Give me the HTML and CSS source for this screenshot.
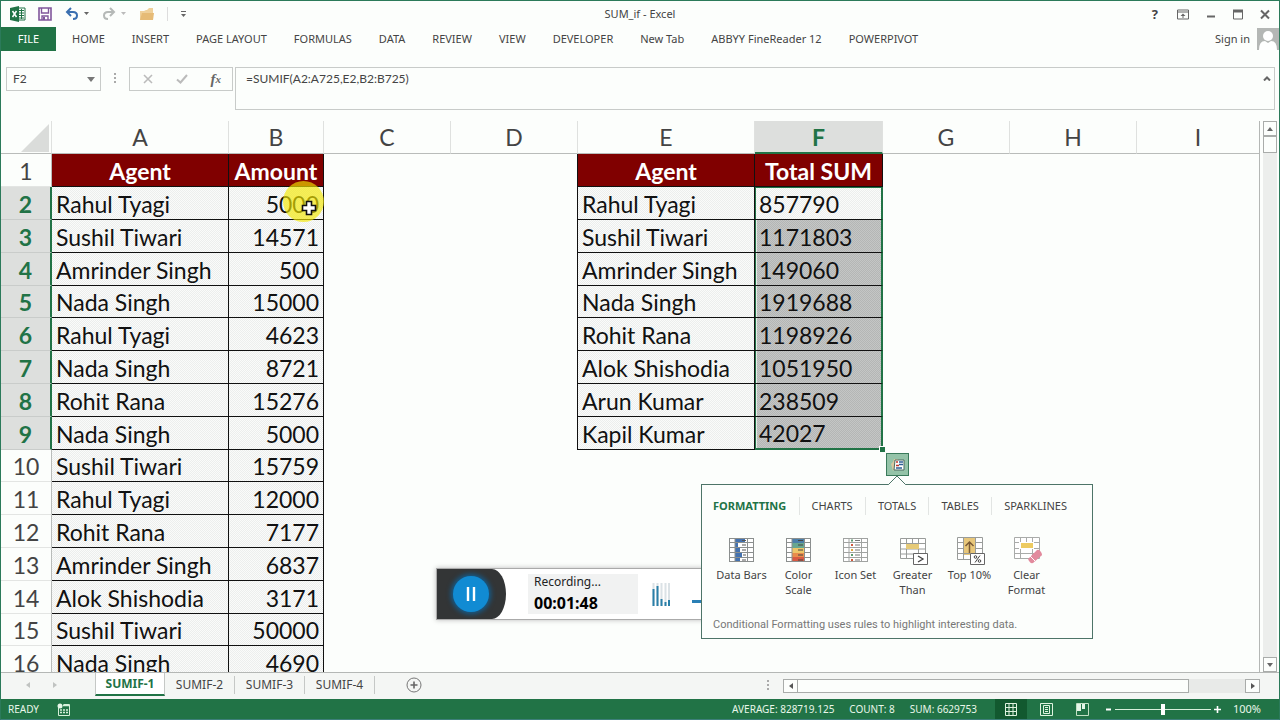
FILE: index.html
```html
<!DOCTYPE html>
<html lang="en">
<head>
<meta charset="utf-8">
<title>SUM_if - Excel</title>
<link rel="stylesheet" href="styles.css">
</head>
<body>
<div class="window">
  <header class="titlebar">
    <div class="quick">
      <svg class="logo" width="16" height="16" viewBox="0 0 16 16"><path d="M8 2h7v12H8z" fill="#fff" stroke="#217346"/><path d="M9 4.500h5M9 7h5M9 9.500h5M9 12h5M11.500 3v10" stroke="#217346"/><path d="M0 2l9-2v16l-9-2z" fill="#217346"/><path d="M2.500 5l4 6M6.500 5l-4 6" stroke="#fff" stroke-width="1.500"/></svg>
      <button class="save" aria-label="Save"><svg width="14" height="14" viewBox="0 0 14 14"><path d="M1 1h12v12H1z" fill="#fff" stroke="#80569b" stroke-width="1.600"/><path d="M3.500 1v5h7V1M4 13V9h6v4" fill="none" stroke="#80569b" stroke-width="1.400"/><path d="M5 10h2v3H5z" fill="#80569b"/></svg></button>
      <button class="undo" aria-label="Undo"><svg width="25" height="14" viewBox="0 0 25 14"><path d="M6 1L2 5l4 4M2 5h6q4 0 4 3.500T8 12" fill="none" stroke="#3a6fb0" stroke-width="2"/><path d="M19 5h5l-2.500 3z" fill="#666"/></svg></button>
      <button class="redo" aria-label="Redo"><svg width="25" height="14" viewBox="0 0 25 14"><path d="M8 1l4 4-4 4M12 5H6Q2 5 2 8.500T6 12" fill="none" stroke="#b5b9b7" stroke-width="2"/><path d="M19 5h5l-2.500 3z" fill="#bbb"/></svg></button>
      <button class="open" aria-label="Open"><svg width="16" height="14" viewBox="0 0 16 14"><path d="M1 13V4h4l2-1h1l2-2h4v12z" fill="#efd09a"/><path d="M1 13l2-7h12l-1 7z" fill="#e6bb76"/></svg></button>
      <span class="rule"></span>
      <button aria-label="Customize"><svg width="7" height="8" viewBox="0 0 7 8"><path d="M1 1.500h5" stroke="#666"/><path d="M1 4h5L3.500 7z" fill="#666"/></svg></button>
    </div>
    <h1>SUM_if - Excel</h1>
    <div class="winbtns">
      <button class="help" aria-label="Help">?</button>
      <button aria-label="Ribbon display"><svg width="12" height="11" viewBox="0 0 12 11"><path d="M.5 1h11v9H.5zM.5 3h11" fill="none" stroke="#666"/><path d="M6 4.500L3.500 7h2v2h1V7h2z" fill="#666"/></svg></button>
      <button aria-label="Minimize"><svg width="10" height="11" viewBox="0 0 10 11"><path d="M1 7.500h8" stroke="#666" stroke-width="2"/></svg></button>
      <button aria-label="Maximize"><svg width="10" height="11" viewBox="0 0 10 11"><path d="M.5 1v9h9V1" fill="none" stroke="#666"/><path d="M0 2h10" stroke="#666" stroke-width="3"/></svg></button>
      <button aria-label="Close"><svg width="10" height="11" viewBox="0 0 10 11"><path d="M1 1.500l8 8M9 1.500l-8 8" stroke="#666" stroke-width="2"/></svg></button>
    </div>
  </header>

  <nav class="ribbon">
    <button class="file">FILE</button>
    <div class="ribbon-tabs">
      <button>HOME</button><button>INSERT</button><button>PAGE LAYOUT</button><button>FORMULAS</button><button>DATA</button><button>REVIEW</button><button>VIEW</button><button>DEVELOPER</button><button>New Tab</button><button>ABBYY FineReader 12</button><button>POWERPIVOT</button>
    </div>
    <a class="signin" href="#">Sign in</a>
    <svg class="avatar" width="22" height="22" viewBox="0 0 22 22"><path d="M0 0h22v22H0z" fill="#b4b7b5"/><circle cx="11" cy="8" r="5" fill="#fff"/><path d="M2 22q0-9 6-9l3 2 3-2q6 0 6 9z" fill="#fff"/></svg>
  </nav>

  <section class="formula-row">
    <div class="namebox"><input aria-label="Name box" value="F2"><button aria-label="Names"><svg width="8" height="5" viewBox="0 0 8 5"><path d="M0 0h8L4 5z" fill="#777"/></svg></button></div>
    <span class="dots"></span>
    <div class="fx">
      <button aria-label="Cancel"><svg width="10" height="10" viewBox="0 0 10 10"><path d="M1 1l8 8M9 1L1 9" stroke="#bbb" stroke-width="1.600"/></svg></button>
      <button aria-label="Enter"><svg width="12" height="10" viewBox="0 0 12 10"><path d="M1 5.500l3.500 3L11 1" fill="none" stroke="#bbb" stroke-width="2"/></svg></button>
      <button class="fn" aria-label="Insert function"><i>f</i><small>x</small></button>
    </div>
    <div class="formula"><input aria-label="Formula" value="=SUMIF(A2:A725,E2,B2:B725)"><button aria-label="Collapse"><svg width="8" height="5" viewBox="0 0 8 5"><path d="M1 4.500l3-3 3 3" fill="none" stroke="#666" stroke-width="2"/></svg></button></div>
  </section>

  <main class="workspace">
    <div class="sheet">
      <table>
        <colgroup><col class="c-row"><col class="c-name"><col class="c-amount"><col class="c-std"><col class="c-std"><col class="c-name"><col class="c-total"><col class="c-std"><col class="c-std"><col></colgroup>
        <thead><tr><th class="corner"><svg width="28" height="28" viewBox="0 0 28 28"><path d="M28 0v28H0z" fill="#dadcda"/></svg></th><th>A</th><th>B</th><th>C</th><th>D</th><th>E</th><th class="on">F</th><th>G</th><th>H</th><th>I</th></tr></thead>
        <tbody>
          <tr><th>1</th><td class="head">Agent</td><td class="head">Amount</td><td></td><td class="pre"></td><td class="head">Agent</td><td class="head">Total SUM</td><td></td><td></td><td></td></tr>
          <tr><th class="on">2</th><td class="data">Rahul Tyagi</td><td class="data num pointed">5000<span class="halo"></span><svg class="cursor" width="16" height="16" viewBox="0 0 16 16"><path d="M5.500 1.500h5v4h4v5h-4v4h-5v-4h-4v-5h4z" fill="#fff" stroke="#111" stroke-width="1.600"/></svg></td><td></td><td class="pre"></td><td class="data">Rahul Tyagi</td><td class="sel first">857790</td><td></td><td></td><td></td></tr>
          <tr><th class="on">3</th><td class="data">Sushil Tiwari</td><td class="data num">14571</td><td></td><td class="pre"></td><td class="data">Sushil Tiwari</td><td class="sel">1171803</td><td></td><td></td><td></td></tr>
          <tr><th class="on">4</th><td class="data">Amrinder Singh</td><td class="data num">500</td><td></td><td class="pre"></td><td class="data">Amrinder Singh</td><td class="sel">149060</td><td></td><td></td><td></td></tr>
          <tr><th class="on">5</th><td class="data">Nada Singh</td><td class="data num">15000</td><td></td><td class="pre"></td><td class="data">Nada Singh</td><td class="sel">1919688</td><td></td><td></td><td></td></tr>
          <tr><th class="on">6</th><td class="data">Rahul Tyagi</td><td class="data num">4623</td><td></td><td class="pre"></td><td class="data">Rohit Rana</td><td class="sel">1198926</td><td></td><td></td><td></td></tr>
          <tr><th class="on">7</th><td class="data">Nada Singh</td><td class="data num">8721</td><td></td><td class="pre"></td><td class="data">Alok Shishodia</td><td class="sel">1051950</td><td></td><td></td><td></td></tr>
          <tr><th class="on">8</th><td class="data">Rohit Rana</td><td class="data num">15276</td><td></td><td class="pre"></td><td class="data">Arun Kumar</td><td class="sel">238509</td><td></td><td></td><td></td></tr>
          <tr><th class="on">9</th><td class="data">Nada Singh</td><td class="data num">5000</td><td></td><td class="pre"></td><td class="data">Kapil Kumar</td><td class="sel last">42027<span class="handle"></span></td><td></td><td></td><td></td></tr>
          <tr><th>10</th><td class="data">Sushil Tiwari</td><td class="data num">15759</td><td colspan="7"></td></tr>
          <tr><th>11</th><td class="data">Rahul Tyagi</td><td class="data num">12000</td><td colspan="7"></td></tr>
          <tr><th>12</th><td class="data">Rohit Rana</td><td class="data num">7177</td><td colspan="7"></td></tr>
          <tr><th>13</th><td class="data">Amrinder Singh</td><td class="data num">6837</td><td colspan="7"></td></tr>
          <tr><th>14</th><td class="data">Alok Shishodia</td><td class="data num">3171</td><td colspan="7"></td></tr>
          <tr><th>15</th><td class="data">Sushil Tiwari</td><td class="data num">50000</td><td colspan="7"></td></tr>
          <tr><th>16</th><td class="data">Nada Singh</td><td class="data num">4690</td><td colspan="7"></td></tr>
        </tbody>
      </table>
    </div>
    <div class="vscroll">
      <button aria-label="Scroll up"><svg width="6" height="4" viewBox="0 0 6 4"><path d="M0 4h6L3 0z" fill="#666"/></svg></button>
      <div class="vthumb"></div><div class="track"></div>
      <button aria-label="Scroll down"><svg width="6" height="4" viewBox="0 0 6 4"><path d="M0 0h6L3 4z" fill="#666"/></svg></button>
    </div>

    <aside class="recorder">
      <div class="rec-side"><button aria-label="Pause"><svg width="10" height="16" viewBox="0 0 10 16"><path d="M2 1v14M8 1v14" stroke="#fff" stroke-width="2.400"/></svg></button></div>
      <div class="rec-info"><span>Recording...</span><strong>00:01:48</strong></div>
      <svg class="meter" width="18" height="23" viewBox="0 0 18 23"><path d="M1.500 0v23M5.500 0v23M9.500 0v23M13.500 0v23M17 0v23" stroke="#dbe2e6" stroke-width="2"/><path d="M1.500 6v17M5.500 3v20M9.500 16v7M13.500 19v4M17 17v6" stroke="#2a7fa8" stroke-width="2"/></svg>
      <span class="rec-min"></span>
    </aside>

    <button class="quick-analysis" aria-label="Quick analysis"><svg width="16" height="16" viewBox="0 0 16 16"><path d="M1 7q2-1 3-5h4v8H5q0 2-2 4z" fill="#d9c9a0"/><path d="M5 3h9v10H4z" fill="#fff" stroke="#4d6b60"/><path d="M6 5h2M6 8.500h3" stroke="#c0392b" stroke-width="1.500"/><path d="M9 5h4M9 7.500h4M6 11h6" stroke="#2f5f95" stroke-width="1.500"/></svg></button>
    <section class="popup">
      <svg class="notch" width="18" height="10" viewBox="0 0 18 10"><path d="M0 10L9 1l9 9z" fill="#fcfefc"/><path d="M0 9.500h.5L9 1l8.500 8.500h.5" fill="none" stroke="#4d7468"/></svg>
      <div class="tabs"><button class="active">FORMATTING</button><button>CHARTS</button><button>TOTALS</button><button>TABLES</button><button>SPARKLINES</button></div>
      <div class="tools">
        <button><svg width="30" height="30" viewBox="0 0 30 30"><path d="M2 3h25v24H2z" fill="#fff"/><path d="M8 3h10v4H8zM8 8h3v4H8zM8 13h5v4H8zM8 18h7v4H8zM8 23h5v4H8z" fill="#4472b0"/><path d="M2 3.500h25M2 7.500h25M2 12.500h25M2 17.500h25M2 22.500h25M2 26.500h25M2.500 3v24M8 3v24M20.500 3v24M26.500 3v24" fill="none" stroke="#8b8f8e"/><path d="M15 5.500h4M15 10h4M15 15h4M16 20h3M15 25h4" stroke="#555"/></svg>Data Bars</button>
        <button><svg width="30" height="30" viewBox="0 0 30 30"><path d="M2 3h25v24H2z" fill="#fff"/><path d="M8 3h13v5H8z" fill="#4b7fa9"/><path d="M8 8h13v5H8z" fill="#68a790"/><path d="M8 13h13v5H8z" fill="#edc568"/><path d="M8 18h13v4H8z" fill="#e98c4c"/><path d="M8 22h13v5H8z" fill="#d95a43"/><path d="M2 3.500h25M2 7.500h6M21 7.500h6M2 12.500h6M21 12.500h6M2 17.500h6M21 17.500h6M2 22.500h6M21 22.500h6M2 26.500h25M2.500 3v24M8 3v24M20.500 3v24M26.500 3v24" fill="none" stroke="#8b8f8e"/><path d="M14 5.500h5M14 10h5M14 15h5M14 20h5M14 25h5" stroke="#444"/></svg>Color Scale</button>
        <button><svg width="30" height="30" viewBox="0 0 30 30"><path d="M2 3h25v24H2z" fill="#fff"/><path d="M2 3.500h25M2 7.500h25M2 12.500h25M2 17.500h25M2 22.500h25M2 26.500h25M2.500 3v24M8 3v24M20.500 3v24M26.500 3v24" fill="none" stroke="#a0a3a1"/><path d="M10 5.500h2M10 20h2" stroke="#5c9b6e" stroke-width="2"/><path d="M10 10h2M10 25h2" stroke="#cf5a3c" stroke-width="2"/><path d="M10 15h2" stroke="#e0a63e" stroke-width="2"/><path d="M14 5.500h5M14 10h5M14 15h5M14 20h5M14 25h5" stroke="#777"/></svg>Icon Set</button>
        <button><svg width="30" height="30" viewBox="0 0 30 30"><path d="M2.500 3.500h25v20h-25z" fill="#fff"/><path d="M2.500 3.500h25v20h-25zM2 8.500h25M2 14h25M2 19h25M8.500 3v20M14.500 3v5M20.500 3v20" fill="none" stroke="#999c9a"/><path d="M8 9h13v5H8z" fill="#e6ca78"/><path d="M15.500 18.500h14v11h-14z" fill="#fff" stroke="#666"/><path d="M20 21l5 3-5 3" fill="none" stroke="#444" stroke-width="1.300"/></svg>Greater Than</button>
        <button><svg width="30" height="30" viewBox="0 0 30 30"><path d="M2.500 3.500h25v21h-25z" fill="#fff"/><path d="M8 3h13v17H8z" fill="#e8c77a"/><path d="M2.500 2.500h25v22h-25zM2 7.500h6M2 13.500h6M2 18.500h13M21 7.500h6M21 13.500h6M8.500 3v21M20.500 3v16" fill="none" stroke="#999c9a"/><path d="M14.500 18V7M10.500 11l4-4 4 4" fill="none" stroke="#7a5a36" stroke-width="1.500"/><path d="M15.500 18.500h14v11h-14z" fill="#fff" stroke="#666"/><circle cx="20.500" cy="22" r="1.300" fill="none" stroke="#444"/><circle cx="24.500" cy="26" r="1.300" fill="none" stroke="#444"/><path d="M25 20.500l-5 7" stroke="#444"/></svg>Top 10%</button>
        <button><svg width="30" height="30" viewBox="0 0 30 30"><path d="M2.500 2.500h25v21h-25z" fill="#fff"/><path d="M2.500 2.500h25v21h-25zM2 7.500h25M2 13.500h25M2 18.500h25M8.500 3v21M14.500 3v5M20.500 3v21" fill="none" stroke="#a9aba9"/><path d="M7 7h15v7H7z" fill="#fff"/><path d="M9 8h12v5H9z" fill="#edcb62"/><path d="M16 24l9-9q2-1 4 2t0 4l-8 7q-3 1-5-4z" fill="#e28a9d"/><path d="M18 21l5 5" stroke="#fff"/></svg>Clear Format</button>
      </div>
      <p>Conditional Formatting uses rules to highlight interesting data.</p>
    </section>
  </main>

  <footer>
    <div class="sheetbar">
      <div class="arrows"><button aria-label="Previous sheet"><svg width="4" height="6" viewBox="0 0 4 6"><path d="M4 0v6L0 3z" fill="#c0c3c1"/></svg></button><button aria-label="Next sheet"><svg width="4" height="6" viewBox="0 0 4 6"><path d="M0 0v6l4-3z" fill="#c0c3c1"/></svg></button></div>
      <button class="stab active">SUMIF-1</button><button class="stab">SUMIF-2</button><button class="stab">SUMIF-3</button><button class="stab">SUMIF-4</button>
      <button class="add" aria-label="New sheet"><svg width="16" height="16" viewBox="0 0 16 16"><circle cx="8" cy="8" r="7" fill="none" stroke="#777"/><path d="M8 4.500v7M4.500 8h7" stroke="#666" stroke-width="1.600"/></svg></button>
      <div class="hscroll"><span class="dots"></span><button aria-label="Scroll left"><svg width="4" height="6" viewBox="0 0 4 6"><path d="M4 0v6L0 3z" fill="#555"/></svg></button><div class="hthumb"></div><div class="track"></div><button aria-label="Scroll right"><svg width="4" height="6" viewBox="0 0 4 6"><path d="M0 0v6l4-3z" fill="#555"/></svg></button></div>
    </div>
    <div class="status">
      <span>READY</span>
      <svg class="macro" width="13" height="13" viewBox="0 0 13 13"><path d="M1.500 4.500v8h11v-11h-6" fill="none" stroke="#d6efd9"/><path d="M6 2.500h6M3 7h2M6 7h2M9 7h2M3 9.500h2M6 9.500h2M9 9.500h2" stroke="#d6efd9" stroke-width="1.600"/><circle cx="3" cy="3" r="2.500" fill="#e6f6e8"/></svg>
      <div class="stats"><span>AVERAGE: 828719.125</span><span>COUNT: 8</span><span>SUM: 6629753</span></div>
      <div class="views">
        <button class="active" aria-label="Normal"><svg width="12" height="13" viewBox="0 0 12 13"><path d="M.5.500h11v12H.5zM0 4.500h12M0 8.500h12M4 0v13M8 0v13" fill="none" stroke="#dff3df"/></svg></button>
        <button aria-label="Page layout"><svg width="13" height="13" viewBox="0 0 13 13"><path d="M.5.500h12v12H.5zM3.500 2.500h6v8h-6zM5 4.500h3M5 6.500h3M5 8.500h3" fill="none" stroke="#dff3df"/></svg></button>
        <button aria-label="Page break preview"><svg width="13" height="13" viewBox="0 0 13 13"><path d="M.5.500h12v12H.5z" fill="none" stroke="#c2e0c4"/><path d="M1 1h4v7H1zM6 1h3v5H6z" fill="#e6f6e8"/></svg></button>
      </div>
      <div class="zoomer"><button aria-label="Zoom out"><svg width="7" height="7" viewBox="0 0 7 7"><path d="M1 3.500h5" stroke="#fff" stroke-width="2"/></svg></button><input type="range" aria-label="Zoom" min="0" max="100" value="50"><button aria-label="Zoom in"><svg width="7" height="7" viewBox="0 0 7 7"><path d="M0 3.500h7M3.500 0v7" stroke="#fff" stroke-width="1.600"/></svg></button></div>
      <span class="pct">100%</span>
    </div>
  </footer>
</div>
</body>
</html>
```
FILE: styles.css
```css
* { box-sizing: border-box; }
body { margin: 0; font: 12px/16px "Noto Sans", "Open Sans", sans-serif; color: #444; background: #fcfefc; }
button { border: 0; padding: 0; margin: 0; background: none; font: inherit; color: inherit; display: flex; align-items: center; justify-content: center; white-space: nowrap; }
input { font: inherit; color: inherit; border: 0; padding: 0; background: none; min-width: 0; }
svg { display: block; flex: none; }
.window { height: 100vh; display: flex; flex-direction: column; border: 1px solid #2b7a5a; border-bottom-color: #3d7f7a; overflow: hidden; }

.titlebar { display: grid; grid-template-columns: 1fr auto 1fr; align-items: center; height: 26px; flex: none; }
.titlebar h1 { margin: 0; font-size: 11px; font-weight: 400; }
.quick { display: flex; align-items: center; padding-left: 9px; }
.save { margin-left: 12px; }
.undo { margin-left: 13px; }
.redo, .open { margin-left: 12px; }
.quick .rule { width: 1px; height: 14px; background: #ddd; margin: 0 12px; }
.winbtns { display: flex; justify-content: flex-end; align-items: center; gap: 17px; padding-right: 9px; }
.help { font-size: 13px; font-weight: 700; margin-right: 2px; }

.ribbon { display: flex; align-items: center; height: 24px; flex: none; font-size: 11px; }
.file { align-self: stretch; width: 55px; background: #217346; color: #fff; }
.ribbon-tabs { display: flex; gap: 27px; padding-left: 16px; flex: 1; }
.signin { color: inherit; text-decoration: none; margin-right: 7px; }

.formula-row { display: flex; align-items: flex-start; padding: 16px 4px 11px 5px; flex: none; font-family: Lato, "Noto Sans", sans-serif; }
.namebox, .fx { display: flex; align-items: center; border: 1px solid #c8cbc9; height: 24px; }
.namebox { width: 95px; padding: 0 5px 0 6px; }
.namebox input { flex: 1; }
.dots { width: 2px; height: 11px; margin: 6px 13px; background: repeating-linear-gradient(#aaa 0 2px, transparent 2px 4px); }
.fx { width: 104px; justify-content: space-between; padding: 0 11px 0 13px; margin-right: 2px; }
.fn { font: italic 700 15px/16px "Liberation Serif", serif; color: #666; }
.fn small { font-size: 11px; }
.formula { flex: 1; display: flex; align-items: flex-start; justify-content: space-between; height: 43px; border: 1px solid #c8cbc9; padding: 3px 3px 0 10px; }
.formula input { flex: 1; }
.formula button { height: 14px; }

.workspace { position: relative; flex: 1; min-height: 0; display: flex; }
.sheet { flex: 1; min-width: 0; overflow: hidden; border-right: 1px solid #b4b7b5; }
table { width: 100%; table-layout: fixed; border-collapse: separate; border-spacing: 0; font: 23px/30px Lato, "Noto Sans", sans-serif; color: #111; }
.c-row { width: 51px; } .c-name { width: 177px; } .c-amount { width: 95px; } .c-std { width: 127px; } .c-total { width: 128px; }
thead tr { height: 33px; }
tbody tr { height: 33px; }
tbody tr:nth-child(5n) { height: 32px; }
th, td { padding: 0; white-space: nowrap; overflow: hidden; }
th { font-weight: 400; color: #444; border-right: 1px solid #dfe1df; border-bottom: 1px solid #b9bcba; }
thead th:last-child { border-right: 0; }
tbody th { border-bottom-color: #e3e5e3; border-right-color: #b9bcba; padding-top: 1px; }
.corner svg { margin: 2px 2px 0 auto; }
th.on { background: #dddfdd; color: #217346; font-weight: 700; border-bottom-color: #c9ccca; }
thead .on { border-bottom: 2px solid #217346; }
tbody .on { border-right: 2px solid #217346; }
.data, .sel, .head { border-right: 1px solid #111; border-bottom: 1px solid #111; }
.data { padding: 1px 4px 0; background: repeating-conic-gradient(#eceeed 0 25%, #fafbfa 0 50%) 0 0 / 2px 2px; }
.pre { border-right: 1px solid #111; }
.num { text-align: right; }
.head { background: #800000; color: #fff; font-weight: 700; text-align: center; padding-top: 1px; }
.sel { padding: 1px 4px 0; background: repeating-conic-gradient(#b4b6b5 0 25%, #c4c6c5 0 50%) 0 0 / 2px 2px; border-right: 2px solid #217346; box-shadow: inset 1px 0 #217346, inset 2px 0 #e4eee8; }
.first { background: repeating-conic-gradient(#eceeed 0 25%, #fafbfa 0 50%) 0 0 / 2px 2px; box-shadow: inset 1px 0 #217346, inset 0 1px #217346; }
.last { position: relative; overflow: visible; border-bottom: 2px solid #217346; padding-top: 0; }
.handle { position: absolute; right: -4px; bottom: -4px; width: 6px; height: 6px; background: #217346; border: 1px solid #fff; border-width: 1px 0 0 1px; }
.pointed { position: relative; overflow: visible; }
.halo { position: absolute; right: -1px; top: -6px; width: 41px; height: 41px; border-radius: 50%; background: rgba(244, 232, 0, .65); }
.cursor { position: absolute; right: 6px; top: 13px; }

.vscroll { width: 19px; padding: 0 2px 0 3px; display: flex; flex-direction: column; }
.vscroll button, .vthumb { height: 15px; border: 1px solid #a9acaa; flex: none; background: #fcfefc; }
.vthumb { height: 17px; }
.track { flex: 1; background: #eceeec; }

.recorder { position: absolute; left: 435px; top: 447px; width: 300px; height: 52px; display: flex; align-items: center; background: #fff; border: 1px solid #aaa; box-shadow: 0 0 5px #bbb; }
.rec-side { width: 69px; height: 50px; display: flex; align-items: center; padding-left: 16px; background: #333536; border-radius: 0 14px 14px 0 / 0 25px 25px 0; }
.rec-side button { width: 36px; height: 36px; border-radius: 50%; background: #118bd3; box-shadow: 0 0 5px 2px #135e91; }
.rec-info { width: 110px; height: 40px; margin-left: 22px; padding-left: 6px; background: #f1f2f2; color: #222; display: flex; flex-direction: column; justify-content: space-between; font-size: 12px; }
.rec-info strong { font-size: 16px; line-height: 22px; color: #000; }
.meter { margin-left: 14px; }
.rec-min { width: 20px; height: 3px; margin: 14px 0 0 22px; background: #2a7fb5; }

.quick-analysis { position: absolute; left: 885px; top: 332px; width: 23px; height: 23px; border: 1px solid #3a7a5b; background: #94c3a8; }
.popup { position: absolute; left: 700px; top: 363px; width: 392px; padding: 12px 11px 5px; background: #fcfefc; border: 1px solid #4d7468; font-size: 11px; }
.notch { position: absolute; left: 186px; top: -10px; }
.tabs { display: flex; justify-content: space-between; padding-right: 14px; }
.tabs button { position: relative; height: 18px; }
.tabs button + button::before { content: ""; position: absolute; left: -13px; top: 0; width: 1px; height: 18px; background: #e2e5e3; }
.tabs .active { color: #217346; font-weight: 700; }
.tools { display: flex; padding-top: 20px; }
.tools button { width: 57px; height: 68px; flex-direction: column; justify-content: flex-start; gap: 2px; padding: 0 6px; white-space: normal; line-height: 15px; }
.tools button:first-child, .tools button:nth-child(5) { white-space: nowrap; }
.popup p { margin: 14px 0 0; color: #777; font-family: Roboto, "Noto Sans", sans-serif; }

.sheetbar { display: flex; height: 27px; background: #f4f6f4; border-top: 1px solid #b4b7b5; }
.arrows { width: 94px; display: flex; align-items: center; padding: 0 0 2px 25px; gap: 23px; }
.stab { width: 70px; height: 18px; border-right: 1px solid #c5c8c6; margin-top: 3px; }
.stab.active { background: #fff; color: #217346; font-weight: 700; height: 23px; margin-top: 0; border: 1px solid #c5c8c6; border-width: 0 1px; border-bottom: 2px solid #217346; }
.add { height: 24px; margin-left: 31px; }
.hscroll { margin-left: auto; width: 513px; display: flex; padding: 6px 19px 0 0; }
.hscroll .dots { margin: 1px 14px 0 1px; flex: none; }
.hscroll button, .hthumb { height: 14px; width: 15px; border: 1px solid #a9acaa; background: #fcfefc; }
.hscroll .hthumb { flex: 7; border-left: 0; }
.hscroll .track { height: 14px; flex: 1; background: #e8eae8; }

.status { display: flex; align-items: center; height: 20px; padding: 0 18px 0 7px; background: #217346; color: #e9f7ea; font-size: 10px; }
.macro { margin-left: 18px; }
.stats { margin-left: auto; display: flex; gap: 15px; }
.views { display: flex; margin-left: 18px; height: 20px; gap: 4px; }
.views button { width: 32px; }
.views .active { background: #12592f; }
.zoomer { display: flex; align-items: center; gap: 3px; margin: 0 12px 0 6px; }
.zoomer input { appearance: none; width: 96px; height: 12px; margin: 0; background: linear-gradient(#d8efdb, #d8efdb) center / 100% 1px no-repeat; }
.zoomer input::-webkit-slider-thumb { appearance: none; width: 4px; height: 11px; background: #fff; }
.pct { font-size: 11px; }
```
